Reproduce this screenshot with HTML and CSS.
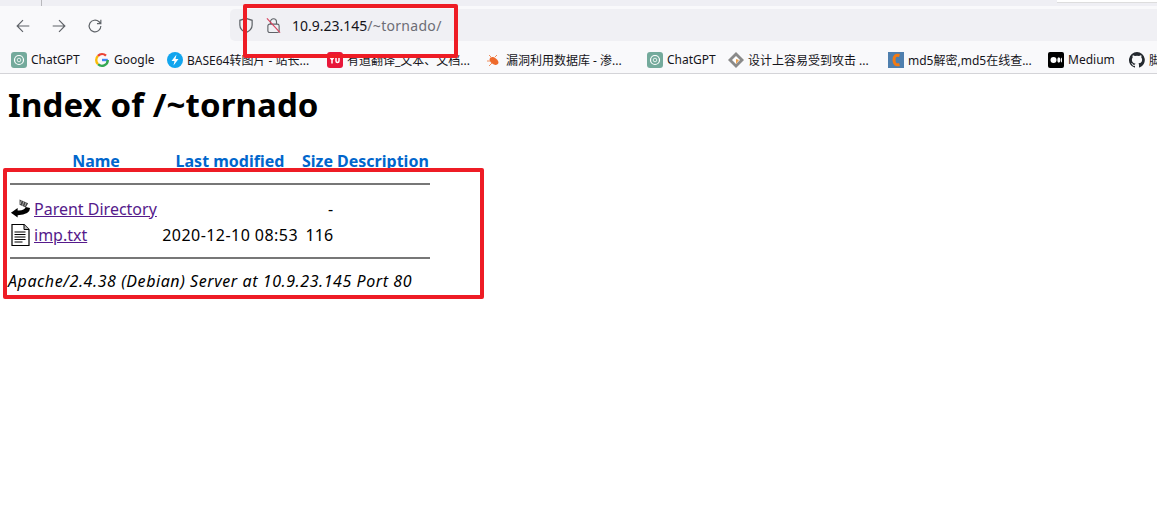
FILE: index.html
```html
<!DOCTYPE html>
<html>
<head>
    <meta charset="utf-8">
    <title>Index of /~tornado</title>
    <link rel="stylesheet" href="styles.css">
</head>
<body>
    <div class="tabstrip">
        <div class="tab-sep"></div>
        <div class="tab-corner"></div>
    </div>
    <div class="toolbar">
        <div class="nav">
            <svg class="nav-icon" viewBox="0 0 20 20" fill="none" stroke="#5f6368" stroke-width="1.3"><path d="M17 10H3.5M10 3.5L3.5 10l6.5 6.5"/></svg>
            <svg class="nav-icon" viewBox="0 0 20 20" fill="none" stroke="#5f6368" stroke-width="1.3"><path d="M3 10h13.5M10 3.5l6.500 6.500-6.500 6.500"/></svg>
            <svg class="nav-icon" viewBox="0 0 20 20" fill="none" stroke="#5f6368" stroke-width="1.3"><path d="M16.500 10a6.500 6.500 0 1 1-2-4.700L16.500 7.200M16.500 3v4.300h-4.300"/></svg>
        </div>
        <div class="urlbar">
            <svg class="shield" viewBox="0 0 16 18" fill="none" stroke="#5f6368" stroke-width="1.300"><path d="M8 1.500l6.500 2v5c0 4-3 6.500-6.500 8-3.500-1.500-6.500-4-6.500-8v-5z"/><path d="M8 1.500v15" stroke-width="1"/></svg>
            <svg class="lock" viewBox="0 0 16 18" fill="none" stroke="#5f6368" stroke-width="1.200"><rect x="2" y="7.500" width="12" height="9" rx="2"/><path d="M4.800 7.500V5a3.200 3.200 0 0 1 6.400 0v2.500"/><path d="M1 1.500l14 15" stroke="#d8405c" stroke-width="1.200"/></svg>
            <span class="host">10.9.23.145</span><span class="path">/~tornado/</span>
        </div>
    </div>
    <div class="bookmarks">
        <div class="bm w-chatgpt">
            <svg class="fav" viewBox="0 0 16 16"><rect width="16" height="16" rx="3" fill="#74aa9c"/><circle cx="8" cy="8" r="4.500" fill="none" stroke="#fff" stroke-width="1.200"/><circle cx="8" cy="8" r="1.800" fill="none" stroke="#fff" stroke-width=".8"/></svg>
            <span>ChatGPT</span>
        </div>
        <div class="bm w-google">
            <svg class="fav" viewBox="0 0 16 16" fill="none" stroke-width="2.400"><path d="M13.800 8H8" stroke="#4285f4"/><path d="M13.800 8a5.800 5.800 0 0 1-9.800 4.200" stroke="#34a853"/><path d="M4 12.200a5.800 5.800 0 0 1 0-8.400" stroke="#fbbc05"/><path d="M4 3.800a5.800 5.800 0 0 1 8-.1" stroke="#ea4335"/></svg>
            <span>Google</span>
        </div>
        <div class="bm w-base64">
            <svg class="fav" viewBox="0 0 16 16"><circle cx="8" cy="8" r="8" fill="#12a5ee"/><path d="M9.500 2.500L4.500 9h3l-1 4.500L11.500 7h-3z" fill="#fff"/></svg>
            <span>BASE64转图片 - 站长...</span>
        </div>
        <div class="bm w-youdao">
            <svg class="fav" viewBox="0 0 16 16"><rect width="16" height="16" rx="3" fill="#e8173a"/><path d="M3 5l2 3 2-3M5 8v3.500M9 5v4q0 1.500 1.500 1.500T12 9V5" fill="none" stroke="#fff" stroke-width="1.500"/></svg>
            <span>有道翻译_文本、文档...</span>
        </div>
        <div class="bm w-vuln">
            <svg class="fav" viewBox="0 0 16 16"><ellipse cx="8" cy="9" rx="5" ry="3.200" transform="rotate(35 8 9)" fill="#ee6a2c"/><path d="M3 3l3 3M1 9h3M3 14l3-3M11 3L9 5" stroke="#f09060" stroke-width="1"/></svg>
            <span>漏洞利用数据库 - 渗...</span>
        </div>
        <div class="bm w-chatgpt2">
            <svg class="fav" viewBox="0 0 16 16"><rect width="16" height="16" rx="3" fill="#74aa9c"/><circle cx="8" cy="8" r="4.500" fill="none" stroke="#fff" stroke-width="1.200"/><circle cx="8" cy="8" r="1.800" fill="none" stroke="#fff" stroke-width=".8"/></svg>
            <span>ChatGPT</span>
        </div>
        <div class="bm w-design">
            <svg class="fav" viewBox="0 0 16 16"><path d="M8 0l8 8-8 8-8-8z" fill="#8a8a8a"/><path d="M8 4l4 4-4 4-4-4z" fill="#fff"/><path d="M8 7l3 1-3 4z" fill="#e8a050"/></svg>
            <span>设计上容易受到攻击 ...</span>
        </div>
        <div class="bm w-md5">
            <svg class="fav" viewBox="0 0 16 16"><rect width="16" height="16" fill="#4f7fae"/><path d="M11.500 3.500Q6 2 6 8t5.500 4.500" fill="none" stroke="#f47a12" stroke-width="3"/></svg>
            <span>md5解密,md5在线查...</span>
        </div>
        <div class="bm w-medium">
            <svg class="fav" viewBox="0 0 16 16"><rect width="16" height="16" rx="2" fill="#000"/><circle cx="5.500" cy="8" r="3" fill="#fff"/><ellipse cx="10.800" cy="8" rx="1.500" ry="2.800" fill="#fff"/><ellipse cx="13.400" cy="8" rx=".6" ry="2.500" fill="#fff"/></svg>
            <span>Medium</span>
        </div>
        <div class="bm w-github">
            <svg class="fav" viewBox="0 0 16 16"><path fill="#24292f" d="M8 0a8 8 0 0 0-2.500 15.600c.4.100.5-.2.500-.4v-1.400c-2.200.5-2.700-1-2.700-1-.4-.9-.9-1.200-.9-1.200-.7-.5.100-.5.100-.5.800.100 1.200.8 1.200.8.700 1.200 1.900.9 2.300.7.100-.5.300-.9.500-1.100-1.800-.2-3.600-.9-3.600-4 0-.9.300-1.600.8-2.100-.1-.2-.4-1 .1-2.100 0 0 .7-.2 2.200.8a7.600 7.600 0 0 1 4 0c1.500-1 2.200-.8 2.200-.8.400 1.100.2 1.900.1 2.100.5.600.8 1.300.8 2.100 0 3.100-1.900 3.700-3.700 3.900.3.300.6.800.6 1.500v2.200c0 .2.100.5.600.4A8 8 0 0 0 8 0z"/></svg>
            <span>脚</span>
        </div>
    </div>

    <div class="page">
        <h1>Index of /~tornado</h1>
        <table class="listing">
            <tr>
                <th class="c-icon"></th>
                <th class="c-name"><a href="#">Name</a></th>
                <th class="c-date"><a href="#">Last modified</a></th>
                <th class="c-size"><a href="#">Size</a></th>
                <th class="c-desc"><a href="#">Description</a></th>
            </tr>
            <tr><th colspan="5" class="rule rule-top"><hr></th></tr>
            <tr>
                <td class="c-icon">
                    <svg class="file-icon" viewBox="0 0 22 22"><path d="M1 15L8 10V12.500Q15 13 16.500 9L21 10Q21 17 8 17.500V20Z" fill="#000"/><path d="M10 1l9 4-2.500 4.500-6.500-3z" fill="#444"/><path d="M12 2l-1.500 4M14.500 3l-1.500 4.500M17 4l-1.500 4" stroke="#ccc" stroke-width=".8"/></svg>
                </td>
                <td><a class="visited" href="#">Parent Directory</a></td>
                <td></td>
                <td class="num">-</td>
                <td></td>
            </tr>
            <tr>
                <td class="c-icon">
                    <svg class="file-icon" viewBox="0 0 20 22" fill="none" stroke="#000"><path d="M1.500.5h12l5 5v16h-17z" stroke-width="1.200"/><path d="M13.500.5v5h5" fill="#bbb" stroke-width="1"/><path d="M4 8h11M4 10.500h11M4 13h11M4 15.500h11M4 18h8" stroke-width="1.200"/></svg>
                </td>
                <td><a class="visited" href="#">imp.txt</a></td>
                <td class="num date">2020-12-10 08:53</td>
                <td class="num">116</td>
                <td></td>
            </tr>
            <tr><th colspan="5" class="rule"><hr></th></tr>
        </table>
        <address>Apache/2.4.38 (Debian) Server at 10.9.23.145 Port 80</address>
    </div>

    <!-- red marks drawn over the screenshot -->
    <div class="mark mark-url"></div>
    <div class="mark mark-list"></div>
</body>
</html>
```

FILE: styles.css
```css
html, body {
    margin: 0;
    padding: 0;
    background: #fff;
    overflow: hidden;
}
body {
    position: relative;
    height: 508px;
    font-family: "Noto Sans", "Noto Sans CJK SC", sans-serif;
    color: #000;
}
.tabstrip {
    height: 6px;
    background: #efeff4;
    display: flex;
    justify-content: space-between;
}
.tab-sep {
    width: 1px;
    height: 6px;
    margin-left: 41px;
    background: #b8b8bc;
}
.tab-corner {
    width: 100px;
    height: 2px;
    background: #fff;
    border-bottom: 1px solid #ddd;
}
.toolbar {
    height: 36px;
    background: #f9f9fb;
    display: flex;
    align-items: center;
}
.nav {
    width: 230px;
    display: flex;
    gap: 18px;
    padding-left: 14px;
    padding-top: 4px;
    box-sizing: border-box;
}
.nav-icon {
    width: 18px;
    height: 18px;
}
.urlbar {
    flex: 1;
    height: 32px;
    margin-top: 2px;
    background: #f0f0f4;
    border-radius: 5px 0 0 5px;
    display: flex;
    align-items: center;
    padding-left: 8px;
    font-size: 14px;
}
.shield {
    width: 16px;
    height: 17px;
    margin-right: 12px;
}
.lock {
    width: 15px;
    height: 17px;
    margin-right: 11px;
}
.host {
    color: #15141a;
}
.path {
    color: #6d6d75;
    letter-spacing: .3px;
}
.bookmarks {
    height: 32px;
    box-sizing: border-box;
    padding: 4px 0 0 11px;
    background: #f9f9fb;
    border-bottom: 1px solid #d4d4d8;
    display: flex;
    align-items: center;
    white-space: nowrap;
    overflow: hidden;
    font-size: 12px;
    color: #15141a;
}
.bm {
    display: flex;
    align-items: center;
    gap: 4px;
    flex: none;
}
.fav {
    width: 16px;
    height: 16px;
    flex: none;
}
.w-chatgpt { width: 83px; }
.w-google { width: 73px; }
.w-base64 { width: 160px; }
.w-youdao { width: 159px; }
.w-vuln { width: 161px; }
.w-chatgpt2 { width: 81px; }
.w-design { width: 160px; }
.w-md5 { width: 160px; }
.w-medium { width: 81px; }
.w-github { width: 40px; }
.page {
    padding: 0 8px;
}
h1 {
    margin: 0;
    padding-top: 11px;
    font-size: 33px;
    line-height: 40px;
    font-weight: 700;
    letter-spacing: .1px;
}
.listing {
    margin-top: 22px;
    border-spacing: 2px;
    font-size: 16px;
    line-height: 22px;
}
.listing td, .listing th {
    padding: 1px;
}
.listing a {
    color: #0066cc;
}
.listing th a {
    text-decoration: none;
}
.listing a.visited {
    color: #551a8b;
}
.c-icon {
    width: 21px;
    padding: 0 !important;
}
.c-name { width: 124px; }
.c-date { width: 136px; }
.c-size { width: 28px; }
.c-desc { width: 90px; }
.num {
    text-align: right;
}
.date {
    letter-spacing: .45px;
}
.rule {
    padding: 0 !important;
}
hr {
    margin: 8px 0;
    height: 0;
    border: 0;
    border-top: 2px solid #777;
}
.rule-top hr {
    margin-bottom: 10px;
}
.file-icon {
    display: block;
    width: 21px;
    height: 22px;
}
address {
    margin-top: 1px;
    font-size: 16px;
    line-height: 22px;
    font-style: italic;
    letter-spacing: .57px;
}
.mark {
    position: absolute;
    border: 4px solid #ee1c25;
    border-radius: 2px;
    box-sizing: border-box;
}
.mark-url {
    left: 243px;
    top: 4px;
    width: 215px;
    height: 54px;
}
.mark-list {
    left: 3px;
    top: 168px;
    width: 481px;
    height: 131px;
}
```
